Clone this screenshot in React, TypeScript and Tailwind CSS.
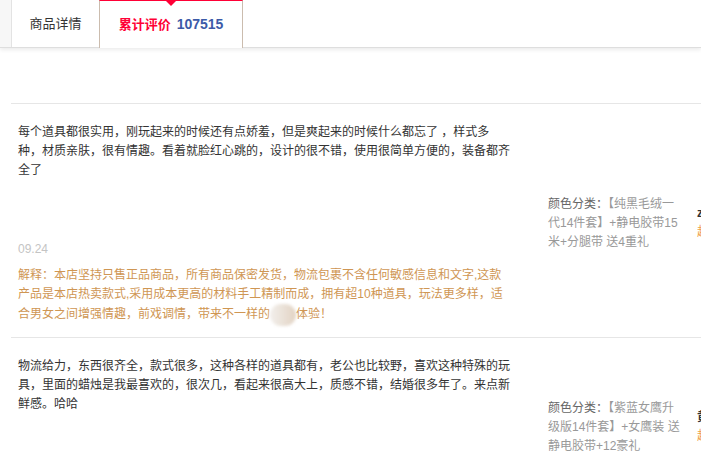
import React from 'react';

const font = { fontFamily: '"Liberation Sans", "Noto Sans CJK SC", sans-serif' };

interface Review {
  lines: string[];
  date?: string;
  reply?: React.ReactNode[];
  sku: string[];
  user: string;
  level: string;
}

const blurred = (
  <span className="inline-block w-[26px] h-[22px] align-middle rounded-full bg-gradient-to-r from-[#f2efec] to-[#e2d3c3] blur-[1.5px]" />
);

const reviews: Review[] = [
  {
    lines: [
      '每个道具都很实用，刚玩起来的时候还有点娇羞，但是爽起来的时候什么都忘了 ，样式多',
      '种，材质亲肤，很有情趣。看着就脸红心跳的，设计的很不错，使用很简单方便的，装备都齐',
      '全了',
    ],
    date: '09.24',
    reply: [
      '解释：本店坚持只售正品商品，所有商品保密发货，物流包裹不含任何敏感信息和文字,这款',
      '产品是本店热卖款式,采用成本更高的材料手工精制而成，拥有超10种道具，玩法更多样，适',
      <>合男女之间增强情趣，前戏调情，带来不一样的{blurred}体验！</>,
    ],
    sku: ['【纯黑毛绒一', '代14件套】+静电胶带15', '米+分腿带 送4重礼'],
    user: 'z***y',
    level: '超级会员',
  },
  {
    lines: [
      '物流给力，东西很齐全，款式很多，这种各样的道具都有，老公也比较野，喜欢这种特殊的玩',
      '具，里面的蜡烛是我最喜欢的，很次几，看起来很高大上，质感不错，结婚很多年了。来点新',
      '鲜感。哈哈',
    ],
    sku: ['【紫蓝女鹰升', '级版14件套】+女鹰装 送', '静电胶带+12豪礼'],
    user: '黄***2',
    level: '超级会员',
  },
];

function ReviewRow({ review }: { review: Review }) {
  return (
    <div className="flex border-t border-[#e6e6e6] min-h-[174px]">
      <div className="w-[537px] shrink-0 pl-[7px] pt-[19px] pb-[14px] text-[12px] leading-[19px] text-[#333]">
        {review.lines.map((l, i) => (
          <div key={i} className="whitespace-nowrap">{l}</div>
        ))}
        {review.date && (
          <div className="mt-[60px] text-[#c4c4c4]">{review.date}</div>
        )}
        {review.reply && (
          <div className="mt-[7px] text-[#cf9653]">
            {review.reply.map((l, i) => (
              <div key={i} className="whitespace-nowrap h-[19px]">{l}</div>
            ))}
          </div>
        )}
      </div>
      <div className="w-[149px] shrink-0 flex items-center pt-[5px] text-[12px] leading-[19px] text-[#999]">
        <div>
          <div className="whitespace-nowrap"><span className="text-[#666]">颜色分类：</span>{review.sku[0]}</div>
          <div className="whitespace-nowrap">{review.sku[1]}</div>
          <div className="whitespace-nowrap">{review.sku[2]}</div>
        </div>
      </div>
      <div className="w-[120px] shrink-0 flex flex-col justify-center pt-[4px] text-[12px] leading-[19px]">
        <div className="text-[#333] font-bold">{review.user}</div>
        <div className="text-[#f0a14a]">{review.level}</div>
      </div>
    </div>
  );
}

export default function App() {
  return (
    <div className="w-[701px] h-[452px] overflow-hidden bg-white" style={font}>
      <div className="flex h-[48px] border-b border-[#dedede] shadow-[0_2px_4px_rgba(0,0,0,0.08)] relative">
        <div className="w-[12px] bg-[#f7f7f7] border-r border-[#e3e3e3]" />
        <div className="w-[87px] flex items-center justify-center text-[13px] text-[#333]">商品详情</div>
        <div className="relative w-[144px] flex items-center justify-center gap-[6px] border-x border-t border-x-[#cbbcae] border-t-[#ff0036] bg-white -mb-px">
          <span className="absolute left-[66px] top-0 w-0 h-0 border-x-[5px] border-x-transparent border-t-[5px] border-t-[#ff0036]" />
          <span className="text-[13px] text-[#ff0036] font-bold">累计评价</span>
          <span className="text-[14px] text-[#3c5aa8] font-bold">107515</span>
        </div>
      </div>
      <div className="ml-[11px] mt-[55px]">
        {reviews.map((r, i) => (
          <ReviewRow key={i} review={r} />
        ))}
      </div>
    </div>
  );
}
